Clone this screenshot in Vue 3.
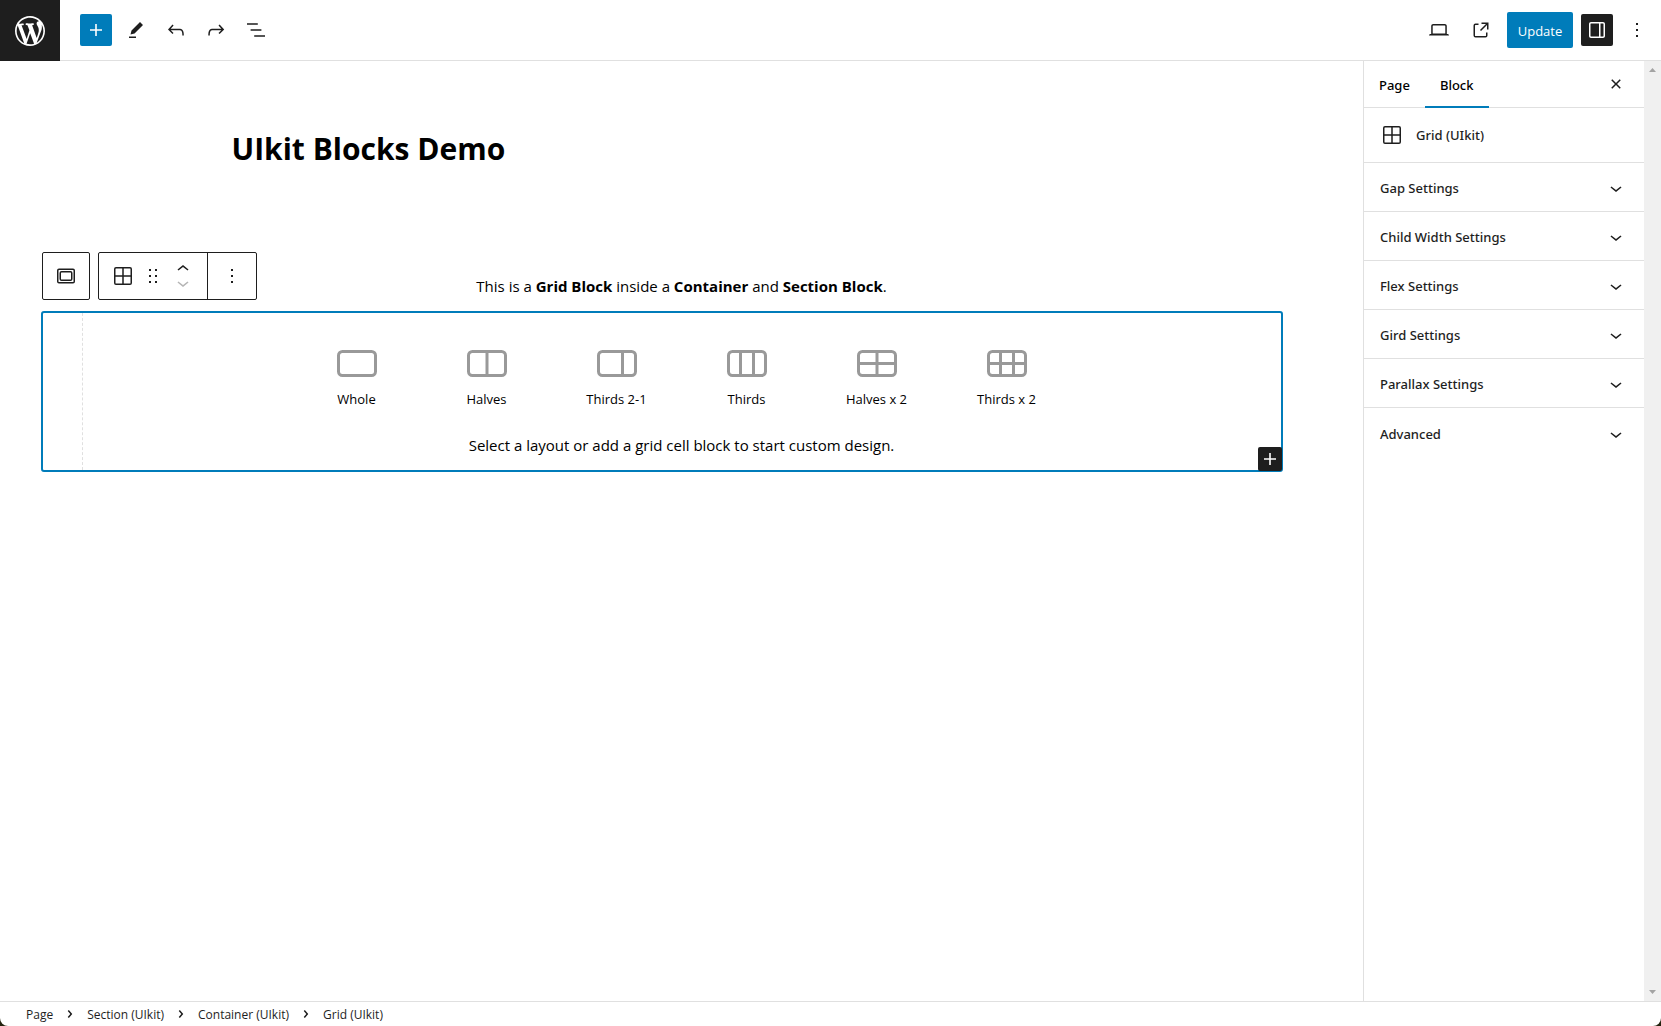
<script setup>
import { ref } from 'vue'

const icons = {
  plus: 'M18 11.2h-5.2V6h-1.6v5.2H6v1.6h5.2V18h1.6v-5.2H18z',
  edit: 'm19 7-3-3-8.5 8.5-1 4 4-1L19 7Zm-7 11.5H5V20h7v-1.5Z',
  undo: 'M18.3 11.7c-.6-.6-1.4-.9-2.3-.9H6.7l2.9-3.3-1.1-1-4.5 5L8.5 16l1-1-2.7-2.7H16c.5 0 .9.2 1.3.5 1 1 1 3.4 1 4.5v.3h1.5v-.2c0-1.5 0-4.3-1.5-5.7z',
  redo: 'M15.6 6.5l-1.1 1 2.9 3.3H8c-.9 0-1.7.3-2.3.9-1.4 1.5-1.4 4.2-1.4 5.6v.2h1.5v-.3c0-1.1 0-3.5 1-4.5.3-.3.7-.5 1.3-.5h9.2L14.5 15l1.1 1.1 4.6-4.6-4.6-5z',
  listView: 'M13.8 5.2H3v1.5h10.8V5.2zm-3.6 12v1.5H21v-1.5H10.2zm7.2-6H6.6v1.5h10.8v-1.5z',
  desktop: 'M20.5 16h-.7V8c0-1.1-.9-2-2-2H6.2c-1.1 0-2 .9-2 2v8h-.7c-.8 0-1.5.7-1.5 1.5h20c0-.8-.7-1.5-1.5-1.5zM5.7 8c0-.3.2-.5.5-.5h11.6c.3 0 .5.2.5.5v7.6H5.7V8z',
  external: 'M19.5 4.5h-7V6h4.44l-5.97 5.97 1.06 1.06L18 7.06v4.44h1.5v-7Zm-13 1a2 2 0 0 0-2 2v10a2 2 0 0 0 2 2h10a2 2 0 0 0 2-2v-3H17v3a.5.5 0 0 1-.5.5h-10a.5.5 0 0 1-.5-.5v-10a.5.5 0 0 1 .5-.5h3V5.5h-3Z',
  drawer: 'M18 4H6c-1.1 0-2 .9-2 2v12c0 1.1.9 2 2 2h12c1.1 0 2-.9 2-2V6c0-1.1-.9-2-2-2zm-4 14.5H6c-.3 0-.5-.2-.5-.5V6c0-.3.2-.5.5-.5h8v13zm4.5-.5c0 .3-.2.5-.5.5h-2.5v-13H18c.3 0 .5.2.5.5v12z',
  more: 'M13 19h-2v-2h2v2zm0-6h-2v-2h2v2zm0-6h-2V5h2v2z',
  close: 'M12 13.06l3.712 3.713 1.061-1.06L13.061 12l3.712-3.712-1.06-1.06L12 10.938 8.288 7.227l-1.061 1.06L10.939 12l-3.712 3.712 1.06 1.061L12 13.061z',
  chevronDown: 'M17.5 11.6L12 16l-5.5-4.4.9-1.2L12 14l4.5-3.6 1 1.2z',
  chevronUp: 'M6.5 12.4L12 8l5.5 4.4-.9 1.2L12 10l-4.5 3.6-1-1.2z',
  chevronRight: 'M10.862 8.04l3.419 3.989-3.419 3.988-1.139-.976 2.582-3.012-2.582-3.012z',
  drag: 'M8 7h2V5H8v2zm0 6h2v-2H8v2zm0 6h2v-2H8v2zm6-14v2h2V5h-2zm0 8h2v-2h-2v2zm0 6h2v-2h-2v2z',
  grid: 'M5 3h14a2 2 0 0 1 2 2v14a2 2 0 0 1-2 2H5a2 2 0 0 1-2-2V5a2 2 0 0 1 2-2zm0 1.5a.5.5 0 0 0-.5.5v6.25h6.75V4.5zm7.75 0v6.75h6.75V5a.5.5 0 0 0-.5-.5zM4.5 12.75V19a.5.5 0 0 0 .5.5h6.25v-6.75zm8.25 0v6.75H19a.5.5 0 0 0 .5-.5v-6.25z',
  container: 'M5 4.500h14a2 2 0 0 1 2 2v11a2 2 0 0 1-2 2H5a2 2 0 0 1-2-2v-11a2 2 0 0 1 2-2zM5 6a.5.5 0 0 0-.5.5v11a.5.5 0 0 0 .5.5h14a.5.5 0 0 0 .5-.5v-11A.5.5 0 0 0 19 6zm2.500 1h9a2 2 0 0 1 2 2v6a2 2 0 0 1-2 2h-9a2 2 0 0 1-2-2V9a2 2 0 0 1 2-2zm0 1.500A.5.5 0 0 0 7 9v6a.5.5 0 0 0 .5.5h9a.5.5 0 0 0 .5-.5V9a.5.5 0 0 0-.5-.5z'
}

const leftTools = [
  { icon: 'edit', label: 'Tools' },
  { icon: 'undo', label: 'Undo' },
  { icon: 'redo', label: 'Redo' },
  { icon: 'listView', label: 'Document overview' }
]

const layouts = [
  { name: 'Whole', lines: '' },
  { name: 'Halves', lines: 'M20 2v23' },
  { name: 'Thirds 2-1', lines: 'M25.500 2v23' },
  { name: 'Thirds', lines: 'M13.500 2v23M26.500 2v23' },
  { name: 'Halves x 2', lines: 'M20 2v23M2 13.500h36' },
  { name: 'Thirds x 2', lines: 'M13.500 2v23M26.500 2v23M2 13.500h36' }
]

const panels = [
  'Gap Settings',
  'Child Width Settings',
  'Flex Settings',
  'Gird Settings',
  'Parallax Settings',
  'Advanced'
]

const crumbs = ['Page', 'Section (UIkit)', 'Container (UIkit)', 'Grid (UIkit)']
const tab = ref('Block')
</script>

<template>
  <div class="editor">
    <header class="topbar">
      <a class="logo" href="#" aria-label="View pages">
        <svg viewBox="-2 -2 24 24" width="36" height="36">
          <path d="M20 10c0-5.510-4.490-10-10-10C4.480 0 0 4.490 0 10c0 5.520 4.480 10 10 10 5.510 0 10-4.480 10-10zM7.780 15.370L4.370 6.220c.55-.02 1.170-.08 1.170-.08.5-.06.44-1.130-.06-1.110 0 0-1.450.11-2.370.11-.18 0-.37 0-.58-.01C4.120 2.690 6.870 1.110 10 1.110c2.330 0 4.450.87 6.050 2.340-.68-.11-1.650.39-1.650 1.580 0 .74.45 1.360.9 2.100.35.61.55 1.360.55 2.460 0 1.490-1.400 5-1.400 5l-3.030-8.370c.54-.02.82-.17.82-.17.5-.05.44-1.250-.06-1.220 0 0-1.440.12-2.380.12-.87 0-2.330-.12-2.330-.12-.5-.03-.56 1.200-.06 1.220l.92.08 1.260 3.410zM17.410 10c.24-.64.74-1.870.43-4.250.7 1.290 1.050 2.710 1.050 4.250 0 3.290-1.730 6.240-4.400 7.780.97-2.590 1.940-5.200 2.920-7.780zM6.100 18.090C3.120 16.650 1.110 13.530 1.110 10c0-1.300.23-2.480.72-3.590C3.250 10.300 4.670 14.200 6.100 18.090zm4.030-6.630l2.580 6.980c-.86.29-1.760.45-2.710.45-.79 0-1.570-.11-2.290-.33.81-2.380 1.620-4.740 2.420-7.100z" />
        </svg>
      </a>
      <div class="tools">
        <button class="tool primary" aria-label="Toggle block inserter">
          <svg class="icon" viewBox="0 0 24 24"><path :d="icons.plus" /></svg>
        </button>
        <button v-for="t in leftTools" :key="t.icon" class="tool" :aria-label="t.label">
          <svg class="icon" viewBox="0 0 24 24"><path :d="icons[t.icon]" /></svg>
        </button>
      </div>
      <div class="actions">
        <button class="tool" aria-label="Preview">
          <svg class="icon" viewBox="0 0 24 24"><path :d="icons.desktop" /></svg>
        </button>
        <a class="tool view" href="#" aria-label="View page">
          <svg class="icon" viewBox="0 0 24 24"><path :d="icons.external" /></svg>
        </a>
        <button class="update">Update</button>
        <button class="tool pressed" aria-label="Settings">
          <svg class="icon" viewBox="0 0 24 24"><path fill-rule="evenodd" :d="icons.drawer" /></svg>
        </button>
        <button class="tool" aria-label="Options">
          <svg class="icon" viewBox="0 0 24 24"><path :d="icons.more" /></svg>
        </button>
      </div>
    </header>

    <div class="body">
      <main class="canvas">
        <h1 class="title">UIkit Blocks Demo</h1>
        <section class="container">
          <p class="intro">
            This is a <strong>Grid Block</strong> inside a <strong>Container</strong> and
            <strong>Section Block</strong>.
          </p>
          <div class="grid-block">
            <div class="block-toolbar">
              <div class="group">
                <button class="tb parent" aria-label="Select container">
                  <svg class="icon" viewBox="0 0 24 24"><path fill-rule="evenodd" :d="icons.container" /></svg>
                </button>
              </div>
              <div class="group">
                <div class="segment">
                  <button class="tb" aria-label="Grid">
                    <svg class="icon" viewBox="0 0 24 24"><path fill-rule="evenodd" :d="icons.grid" /></svg>
                  </button>
                  <button class="tb" aria-label="Drag">
                    <svg class="icon" viewBox="0 0 24 24"><path :d="icons.drag" /></svg>
                  </button>
                  <div class="movers">
                    <button aria-label="Move up">
                      <svg class="icon" viewBox="0 0 24 24"><path :d="icons.chevronUp" /></svg>
                    </button>
                    <button aria-label="Move down" disabled>
                      <svg class="icon" viewBox="0 0 24 24"><path :d="icons.chevronDown" /></svg>
                    </button>
                  </div>
                </div>
                <button class="tb more" aria-label="Block options">
                  <svg class="icon" viewBox="0 0 24 24"><path :d="icons.more" /></svg>
                </button>
              </div>
            </div>

            <div class="cell">
              <div class="layouts">
                <button v-for="l in layouts" :key="l.name" class="layout">
                  <svg viewBox="0 0 40 27" width="40" height="27">
                    <rect x="1.500" y="1.500" width="37" height="24" rx="4" />
                    <path :d="l.lines" />
                  </svg>
                  <span>{{ l.name }}</span>
                </button>
              </div>
              <p class="hint">Select a layout or add a grid cell block to start custom design.</p>
            </div>
            <button class="appender" aria-label="Add block">
              <svg class="icon" viewBox="0 0 24 24"><path :d="icons.plus" /></svg>
            </button>
          </div>
        </section>
      </main>

      <aside class="sidebar">
        <div class="panel">
          <div class="tabs">
            <button
              v-for="t in ['Page', 'Block']"
              :key="t"
              class="tab"
              :class="{ active: tab === t }"
              @click="tab = t"
            >{{ t }}</button>
            <button class="close" aria-label="Close settings">
              <svg class="icon" viewBox="0 0 24 24"><path :d="icons.close" /></svg>
            </button>
          </div>
          <div class="card">
            <svg class="icon" viewBox="0 0 24 24"><path fill-rule="evenodd" :d="icons.grid" /></svg>
            <h2>Grid (UIkit)</h2>
          </div>
          <button v-for="p in panels" :key="p" class="section">
            <span>{{ p }}</span>
            <svg class="icon" viewBox="0 0 24 24"><path :d="icons.chevronDown" /></svg>
          </button>
        </div>
        <div class="scrollbar" aria-hidden="true">
          <svg viewBox="0 0 7 4" width="7" height="4"><path d="M0 4L3.500 0 7 4z" /></svg>
          <svg viewBox="0 0 7 4" width="7" height="4"><path d="M0 0h7L3.500 4z" /></svg>
        </div>
      </aside>
    </div>

    <footer class="crumbs">
      <template v-for="(c, i) in crumbs" :key="c">
        <svg v-if="i" class="icon" viewBox="0 0 24 24"><path :d="icons.chevronRight" /></svg>
        <a href="#">{{ c }}</a>
      </template>
    </footer>
  </div>
</template>

<style>
html {
  background: #23230f;
}
body {
  margin: 0;
}
</style>

<style scoped>
.editor {
  display: flex;
  flex-direction: column;
  min-height: 100vh;
  overflow: hidden;
  border-radius: 0 0 8px 8px;
  background: #fff;
  color: #1e1e1e;
  font-family: "Segoe UI", "Open Sans", "Noto Sans", sans-serif;
  font-size: 12px;
}
.editor *,
.editor {
  box-sizing: border-box;
}
button {
  margin: 0;
  padding: 0;
  border: 0;
  background: none;
  color: inherit;
  font: inherit;
  cursor: pointer;
}
a {
  color: inherit;
  text-decoration: none;
}
svg {
  display: block;
  flex: none;
}
.icon {
  width: 24px;
  height: 24px;
  fill: currentColor;
}

.topbar {
  display: flex;
  height: 61px;
  border-bottom: 1px solid #e0e0e0;
}
.logo {
  display: grid;
  place-items: center;
  width: 60px;
  height: 61px;
  background: #1e1e1e;
  fill: #fff;
}
.tools,
.actions {
  display: flex;
  align-items: center;
  gap: 8px;
}
.tools {
  margin-left: 20px;
}
.actions {
  margin-left: auto;
  padding-right: 8px;
}
.tool {
  display: grid;
  place-items: center;
  width: 32px;
  height: 32px;
  border-radius: 2px;
}
.tool.view {
  width: 36px;
}
.primary {
  background: #007cba;
  color: #fff;
}
.pressed {
  background: #1e1e1e;
  color: #fff;
}
.update {
  width: 66px;
  height: 36px;
  padding-top: 2px;
  border-radius: 2px;
  background: #007cba;
  color: #fff;
  font-size: 13px;
}

.body {
  display: flex;
  flex: 1;
}
.canvas {
  flex: 1;
  min-width: 0;
  color: #000;
}
.title {
  max-width: 900px;
  margin: 64px auto 0;
  font-size: 30px;
  line-height: 48px;
  font-weight: 700;
}
.container {
  max-width: 1200px;
  margin: 101px auto 0;
}
.intro,
.hint {
  margin: 0;
  font-size: 15px;
  line-height: 24px;
  text-align: center;
}
.grid-block {
  position: relative;
  display: flex;
  margin: 13px -1px 0 -41px;
  border: 2px solid #007cba;
  border-radius: 3px;
}
.cell {
  flex: 1;
  margin-left: 39px;
  padding: 37px 0 13px;
  border-left: 1px dashed #e0e0e0;
}
.layouts {
  display: flex;
  justify-content: center;
  gap: 30px;
  margin-bottom: 24px;
}
.layout {
  display: flex;
  flex-direction: column;
  align-items: center;
  gap: 12px;
  width: 100px;
  font-size: 13px;
  line-height: 20px;
}
.layout svg {
  fill: none;
  stroke: #999;
  stroke-width: 3px;
}
.appender {
  position: absolute;
  right: -1px;
  bottom: -1px;
  border-radius: 2px;
  background: #1e1e1e;
  color: #fff;
}

.block-toolbar {
  position: absolute;
  left: -1px;
  bottom: calc(100% + 13px);
  display: flex;
  gap: 8px;
  color: #1e1e1e;
}
.group {
  display: flex;
  height: 48px;
  border: 1px solid #1e1e1e;
  border-radius: 2px;
  background: #fff;
}
.tb {
  display: grid;
  place-items: center;
}
.parent {
  width: 46px;
}
.segment {
  display: flex;
  align-items: center;
  gap: 6px;
  padding: 0 12px;
  border-right: 1px solid #1e1e1e;
}
.movers {
  display: flex;
  flex-direction: column;
}
.movers button {
  display: flex;
  align-items: center;
  height: 14px;
}
.movers button:disabled {
  color: #b5b5b5;
}
.more {
  width: 48px;
}

.sidebar {
  display: flex;
  width: 298px;
  border-left: 1px solid #e0e0e0;
  font-family: "Segoe UI", "Noto Sans", "Open Sans", sans-serif;
  font-size: 13px;
}
.panel {
  flex: 1;
}
.tabs {
  display: flex;
  height: 47px;
  border-bottom: 1px solid #e0e0e0;
}
.tab {
  height: 47px;
  padding: 2px 15px 0;
  border-bottom: 2px solid transparent;
  color: #000;
  font-weight: 500;
}
.tab.active {
  border-color: #007cba;
}
.close {
  margin-left: auto;
  padding-right: 16px;
}
.card {
  display: flex;
  align-items: center;
  gap: 12px;
  height: 55px;
  padding: 0 16px;
  border-bottom: 1px solid #e0e0e0;
}
.card h2 {
  margin: 0;
  font-size: 13px;
  font-weight: 500;
}
.section {
  display: flex;
  align-items: center;
  justify-content: space-between;
  width: 100%;
  height: 49px;
  padding: 2px 16px 0;
  border-bottom: 1px solid #e0e0e0;
  font-weight: 500;
}
.section:last-child {
  border-bottom: 0;
}
.scrollbar {
  display: flex;
  flex-direction: column;
  align-items: center;
  justify-content: space-between;
  width: 17px;
  padding: 7px 0;
  background: #f0f0f0;
  fill: #a3a3a3;
}

.crumbs {
  display: flex;
  align-items: center;
  height: 25px;
  padding-left: 26px;
  border-top: 1px solid #e0e0e0;
}
.crumbs .icon {
  margin: 0 5px;
}
</style>
